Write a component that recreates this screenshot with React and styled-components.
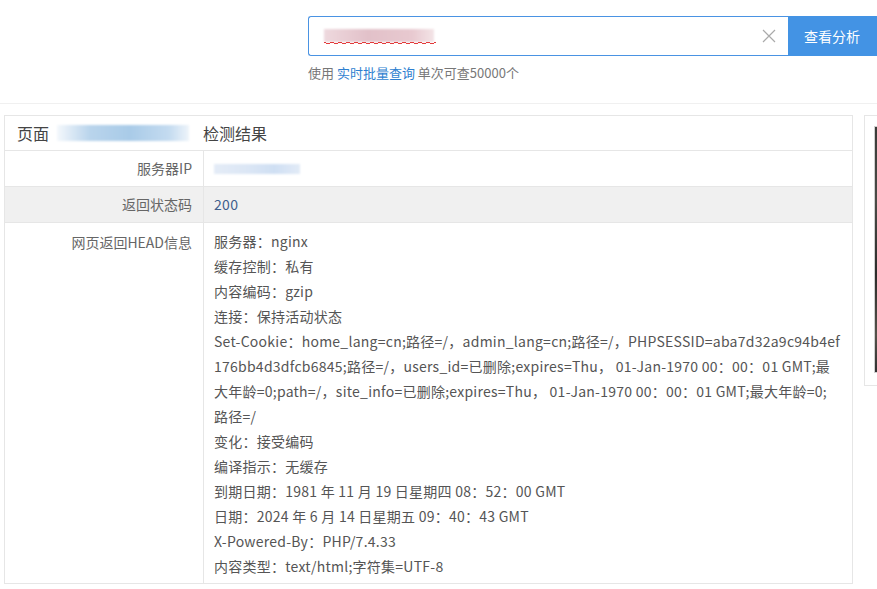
import React from 'react'
import styled, { createGlobalStyle } from 'styled-components'

const GlobalStyle = createGlobalStyle`
  html, body {
    margin: 0;
    padding: 0;
    background: #fff;
    overflow: hidden;
  }
  body {
    font-family: "Microsoft YaHei", "Noto Sans CJK SC", "Noto Sans", sans-serif;
    color: #555;
  }
`

const Header = styled.div`
  height: 104px;
  border-bottom: 1px solid #f0f0f0;
  padding-left: 308px;
  padding-top: 16px;
  box-sizing: border-box;
`

const SearchRow = styled.div`
  display: flex;
  width: 620px;
  height: 40px;
`

const InputBox = styled.div`
  position: relative;
  flex: none;
  width: 480px;
  border: 1px solid #4a93e3;
  border-right: none;
  border-radius: 3px 0 0 3px;
  box-sizing: border-box;
  display: flex;
  align-items: center;
  padding: 0 12px 0 15px;
`

const Typed = styled.span`
  position: relative;
  display: inline-block;
  width: 112px;
  height: 20px;
`

const Blurred = styled.span`
  position: absolute;
  left: 0;
  top: 3px;
  width: 110px;
  height: 13px;
  background: linear-gradient(90deg, #eed9de, #e2c1c9 40%, #e8c9d0 80%, #f3e4e7);
  filter: blur(1px);
`

const Squiggle = styled.svg`
  position: absolute;
  left: 0;
  top: 15px;
`

const ClearIcon = styled.span`
  margin-left: auto;
  display: flex;
  color: #aaa;
`

const SearchButton = styled.button`
  flex: none;
  width: 100px;
  border: none;
  background: #4393e4;
  color: #fff;
  font-family: inherit;
  font-size: 14px;
  text-align: left;
  padding-left: 16px;
  cursor: pointer;
`

const Hint = styled.div`
  margin-top: 10px;
  font-size: 13px;
  color: #777;
  line-height: 14px;
`

const Link = styled.a`
  color: #2f7fd0;
  text-decoration: none;
`

const Main = styled.div`
  display: flex;
  align-items: flex-start;
  padding: 11px 0 0 4px;
  gap: 11px;
`

const Table = styled.div`
  flex: none;
  width: 849px;
  border: 1px solid #e6e6e6;
  box-sizing: border-box;
`

const TitleRow = styled.div`
  height: 34px;
  display: flex;
  align-items: center;
  padding-left: 12px;
  font-size: 16px;
  color: #444;
  border-bottom: 1px solid #e6e6e6;
`

const TitleBlur = styled.span`
  display: inline-block;
  width: 132px;
  height: 16px;
  margin: 0 14px 0 8px;
  background: linear-gradient(90deg, #f4f8fc, #b9d4ec 25%, #a9cbe8 55%, #c4dbf0 85%, #eef4fa);
  filter: blur(1.2px);
`

const Row = styled.div`
  display: flex;
  background: ${p => (p.shaded ? '#f0f0f0' : '#fff')};
  border-bottom: ${p => (p.last ? 'none' : '1px solid #e6e6e6')};
`

const Label = styled.div`
  flex: none;
  width: 199px;
  box-sizing: border-box;
  text-align: right;
  padding: ${p => (p.tall ? '7px 11px 0 0' : '0 11px 0 0')};
  line-height: ${p => (p.tall ? '25px' : '35px')};
  font-size: 14px;
  color: #666;
  border-right: 1px solid #e6e6e6;
`

const Value = styled.div`
  flex: 1;
  padding: ${p => (p.tall ? '6px 0 4px 10px' : '0 0 0 10px')};
  line-height: ${p => (p.tall ? '25px' : '35px')};
  font-size: 14px;
  letter-spacing: ${p => (p.tall ? '0.25px' : '0.3px')};
  color: ${p => p.color || '#555'};
  display: flex;
  align-items: center;
`

const Lines = styled.div`
  display: flex;
  flex-direction: column;
`

const Line = styled.div`
  white-space: nowrap;
`

const IpBlur = styled.span`
  display: inline-block;
  width: 86px;
  height: 10px;
  background: linear-gradient(90deg, #e4ecf7, #dbe6f5 40%, #cfdff3 70%, #e2ebf7);
  filter: blur(0.8px);
`

const SideCard = styled.div`
  flex: none;
  width: 120px;
  height: 271px;
  border: 1px solid #e6e6e6;
  box-sizing: border-box;
  padding: 10px 0 0 9px;
`

const Photo = styled.div`
  height: 247px;
  border: 1px solid #d0d0d0;
  background: linear-gradient(180deg, #3a3b38 0%, #4a4b46 30%, #2c2c2a 60%, #55524a 85%, #303030 100%);
  box-sizing: border-box;
`

const headLines = [
  '服务器：nginx',
  '缓存控制：私有',
  '内容编码：gzip',
  '连接：保持活动状态',
  'Set-Cookie：home_lang=cn;路径=/，admin_lang=cn;路径=/，PHPSESSID=aba7d32a9c94b4ef',
  '176bb4d3dfcb6845;路径=/，users_id=已删除;expires=Thu， 01-Jan-1970 00：00：01 GMT;最',
  '大年龄=0;path=/，site_info=已删除;expires=Thu， 01-Jan-1970 00：00：01 GMT;最大年龄=0;',
  '路径=/',
  '变化：接受编码',
  '编译指示：无缓存',
  '到期日期：1981 年 11 月 19 日星期四 08：52：00 GMT',
  '日期：2024 年 6 月 14 日星期五 09：40：43 GMT',
  'X-Powered-By：PHP/7.4.33',
  '内容类型：text/html;字符集=UTF-8',
]

const wave = Array.from({ length: 28 }, (_, i) => `Q${i * 4 + 1} ${i % 2 ? 4 : 0} ${i * 4 + 2} 2 T${i * 4 + 4} 2`).join(' ')

const App = () => (
  <>
    <GlobalStyle />
    <Header>
      <SearchRow>
        <InputBox>
          <Typed>
            <Blurred />
            <Squiggle width="112" height="5" viewBox="0 0 112 5">
              <path d={`M0 2 ${wave}`} fill="none" stroke="#e23a3a" strokeWidth="1" />
            </Squiggle>
          </Typed>
          <ClearIcon>
            <svg width="14" height="14" viewBox="0 0 14 14">
              <path d="M1 1 L13 13 M13 1 L1 13" stroke="#aaa" strokeWidth="1.2" />
            </svg>
          </ClearIcon>
        </InputBox>
        <SearchButton>查看分析</SearchButton>
      </SearchRow>
      <Hint>
        使用 <Link href="#">实时批量查询</Link> 单次可查50000个
      </Hint>
    </Header>
    <Main>
      <Table>
        <TitleRow>
          页面
          <TitleBlur />
          检测结果
        </TitleRow>
        <Row>
          <Label>服务器IP</Label>
          <Value>
            <IpBlur />
          </Value>
        </Row>
        <Row shaded>
          <Label>返回状态码</Label>
          <Value color="#3f5f8c">200</Value>
        </Row>
        <Row last>
          <Label tall>网页返回HEAD信息</Label>
          <Value tall>
            <Lines>
              {headLines.map((l, i) => (
                <Line key={i}>{l}</Line>
              ))}
            </Lines>
          </Value>
        </Row>
      </Table>
      <SideCard>
        <Photo />
      </SideCard>
    </Main>
  </>
)

export default App
